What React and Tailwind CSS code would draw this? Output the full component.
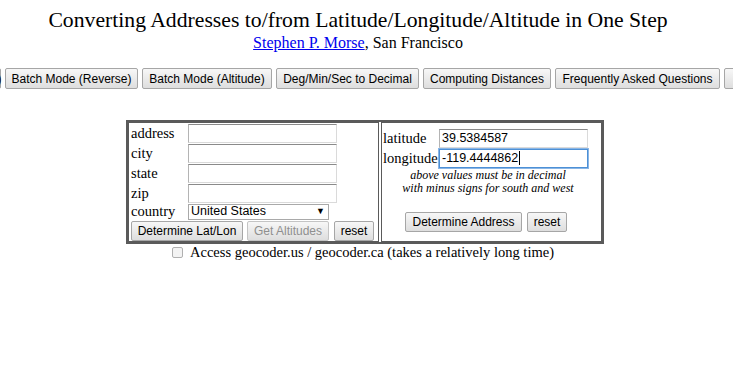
import React from "react";

const serif = { fontFamily: '"Liberation Serif", "Times New Roman", serif' };

function Btn({ children, disabled, className = "" }) {
  return (
    <button
      type="button"
      className={
        "shrink-0 whitespace-nowrap rounded-[2px] border border-[#a6a6a6] bg-gradient-to-b from-[#f7f7f7] to-[#dedede] px-0 font-['Liberation_Sans',Arial,sans-serif] text-[12px] leading-none " +
        (disabled ? "text-[#8f8f8f] border-[#c4c4c4]" : "text-black") +
        " " +
        className
      }
    >
      {children}
    </button>
  );
}

function TextInput({ value = "", focused }) {
  return (
    <div
      className={
        "flex h-[19px] w-[149px] items-center bg-white px-[2px] font-['Liberation_Sans',Arial,sans-serif] text-[12.5px] leading-none text-black " +
        (focused
          ? "border border-[#4d90d6] shadow-[0_0_0_1px_#8ab6e6]"
          : "border border-t-[#8a8a8a] border-l-[#b4b4b4] border-r-[#dadada] border-b-[#dadada]")
      }
    >
      <span>{value}</span>
      {focused && <span className="ml-[1px] inline-block h-[14px] w-px bg-black" />}
    </div>
  );
}

export default function App() {
  return (
    <div className="h-[369px] w-[733px] overflow-hidden bg-white text-black" style={serif}>
      <div className="w-[716px] pt-[7px] text-center">
        <div className="text-[21.7px] leading-[27px]">
          Converting Addresses to/from Latitude/Longitude/Altitude in One Step
        </div>
        <div className="text-[16px] leading-[18px]">
          <a href="#" className="text-[#0000ee] underline">
            Stephen P. Morse
          </a>
          , San Francisco
        </div>
      </div>

      <div className="mt-[16px] flex gap-[4px] overflow-hidden">
        <Btn className="-ml-[119px] h-[21px] w-[120px]">Batch Mode (Forward)</Btn>
        <Btn className="h-[21px] w-[133px]">Batch Mode (Reverse)</Btn>
        <Btn className="h-[21px] w-[130px]">Batch Mode (Altitude)</Btn>
        <Btn className="h-[21px] w-[143px]">Deg/Min/Sec to Decimal</Btn>
        <Btn className="h-[21px] w-[128px]">Computing Distances</Btn>
        <Btn className="h-[21px] w-[165px]">Frequently Asked Questions</Btn>
        <Btn className="h-[21px] w-[60px]">More</Btn>
      </div>

      <div className="ml-[126px] mt-[31px] flex w-[478px] gap-[2px] border-2 border-[#5a5a5a] text-[14.5px]">
        <div className="w-[251px] border border-[#5a5a5a] pl-[2px]">
          {["address", "city", "state", "zip"].map((l) => (
            <div key={l} className="flex h-[20px] items-center">
              <div className="w-[57px] leading-none">{l}</div>
              <TextInput />
            </div>
          ))}
          <div className="flex h-[17px] items-center">
            <div className="w-[57px] leading-none">country</div>
            <div className="flex h-[16px] w-[141px] items-center justify-between border border-[#a9a9a9] bg-white pl-[2px] pr-[3px] font-['Liberation_Sans',Arial,sans-serif] text-[12.5px] leading-none">
              <span>United States</span>
              <span className="text-[9px]">▼</span>
            </div>
          </div>
          <div className="mt-[1px] flex gap-[4px]">
            <Btn className="h-[20px] w-[112px]">Determine Lat/Lon</Btn>
            <Btn disabled className="h-[20px] w-[82px]">Get Altitudes</Btn>
            <Btn className="ml-[1px] h-[20px] w-[40px]">reset</Btn>
          </div>
        </div>

        <div className="flex flex-1 flex-col border border-[#5a5a5a] pl-[1px] pt-[5px]">
          <div className="flex h-[20px] items-center">
            <div className="w-[56px] leading-none">latitude</div>
            <TextInput value="39.5384587" />
          </div>
          <div className="flex h-[20px] items-center">
            <div className="w-[56px] leading-none">longitude</div>
            <TextInput value="-119.4444862" focused />
          </div>
          <div className="mt-[1px] pr-[8px] text-center text-[12px] italic leading-[13px]">
            above values must be in decimal
            <br />
            with minus signs for south and west
          </div>
          <div className="mt-[17px] flex justify-center gap-[5px] pr-[12px]">
            <Btn className="h-[20px] w-[117px]">Determine Address</Btn>
            <Btn className="h-[20px] w-[40px]">reset</Btn>
          </div>
        </div>
      </div>

      <div className="flex items-center pl-[172px] text-[14.5px] leading-[17px]">
        <span className="mr-[7px] inline-block h-[11px] w-[11px] rounded-[2px] border border-[#b0b0b0] bg-[#f3f3f3]" />
        <span>Access geocoder.us / geocoder.ca (takes a relatively long time)</span>
      </div>
    </div>
  );
}
